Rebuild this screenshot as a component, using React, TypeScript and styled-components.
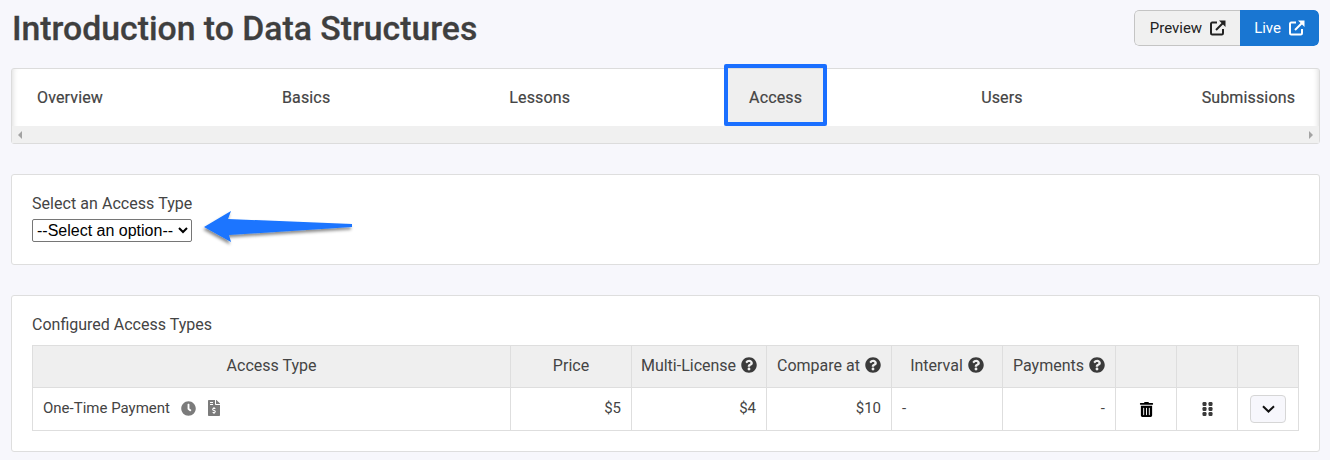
import React from "react";
import styled, { createGlobalStyle } from "styled-components";
import { FaClock, FaFileInvoiceDollar, FaQuestionCircle, FaTrashAlt } from "react-icons/fa";

const Global = createGlobalStyle`
  html, body { margin: 0; padding: 0; background: #f7f7fc; }
  body { font-family: Roboto, "Liberation Sans", sans-serif; color: #444; overflow: hidden; }
  * { box-sizing: border-box; }
`;

const Page = styled.div`
  width: 1330px;
  height: 460px;
  padding: 0 10px 0 11px;
  overflow: hidden;
`;

const Header = styled.header`
  display: flex;
  justify-content: space-between;
  align-items: center;
  height: 68px;
  padding: 0 1px 12px 1px;
`;

const Title = styled.h1`
  margin: 2px 0 0;
  font-size: 33.75px;
  line-height: 44px;
  font-weight: 500;
  color: #3f3f3f;
  -webkit-text-stroke: 0.3px #3f3f3f;
`;

const ButtonGroup = styled.div`
  display: flex;
  height: 36px;
  border-radius: 5px;
  overflow: hidden;
`;

const ViewButton = styled.button<{ $live?: boolean }>`
  display: flex;
  align-items: center;
  gap: 8px;
  height: 100%;
  padding: ${(p) => (p.$live ? "0 14px" : "0 14px 0 15px")};
  font: 400 15px Roboto, sans-serif;
  color: ${(p) => (p.$live ? "#fff" : "#222")};
  background: ${(p) => (p.$live ? "#1976d2" : "#f0f0f0")};
  border: ${(p) => (p.$live ? "none" : "1px solid #c4c4c4")};
  border-right: none;
  border-radius: ${(p) => (p.$live ? "0 5px 5px 0" : "5px 0 0 5px")};
`;

const NavCard = styled.nav`
  height: 76px;
  background: #fff;
  border: 1px solid #dcdcdc;
  border-radius: 3px;
  display: flex;
  flex-direction: column;
  box-shadow: inset 6px 0 6px -6px rgba(0,0,0,0.18), inset -6px 0 6px -6px rgba(0,0,0,0.18);
`;

const TabRow = styled.div`
  display: flex;
  height: 57px;
  flex: none;
  gap: 129px;
`;

const Tab = styled.a<{ $active?: boolean }>`
  display: flex;
  align-items: center;
  justify-content: center;
  padding: 0 25px;
  font-size: 16px;
  font-weight: 400;
  letter-spacing: 0.14px;
  color: #444;
  -webkit-text-stroke: 0.2px #444;
  ${(p) =>
    p.$active &&
    `
    position: relative;
    background: #efefef;
    &::after {
      content: "";
      position: absolute;
      inset: -5px 0 0 0;
      border: 4px solid #1a6fff;
      border-radius: 2px;
    }
  `}
`;

const Scrollbar = styled.div`
  flex: 1;
  background: #f0f0f0;
  display: flex;
  align-items: center;
  justify-content: space-between;
  padding: 0 6px;
`;

const ScrollArrow = styled.span<{ $right?: boolean }>`
  width: 0;
  height: 0;
  border-top: 4px solid transparent;
  border-bottom: 4px solid transparent;
  ${(p) => (p.$right ? "border-left: 4px solid #a3a3a3;" : "border-right: 4px solid #a3a3a3;")}
`;

const SelectCard = styled.section`
  position: relative;
  margin-top: 30px;
  height: 91px;
  background: #fff;
  border: 1px solid #dedede;
  border-radius: 3px;
  padding: 19px 20px;
`;

const FieldLabel = styled.label`
  display: block;
  font-size: 16px;
  line-height: 19px;
  letter-spacing: 0.05px;
  color: #444;
  margin-bottom: 6px;
`;

const AccessSelect = styled.select`
  display: block;
  width: 160px;
  height: 23px;
  font: 16px "Liberation Sans", Arial, sans-serif;
  color: #000;
  background: #fff;
  border: 1px solid #767676;
  border-radius: 2px;
  padding: 0;
`;

const Arrow = styled.svg`
  position: absolute;
  left: 186px;
  top: 26px;
  overflow: visible;
`;

const TableCard = styled.section`
  margin-top: 30px;
  height: 157px;
  background: #fff;
  border: 1px solid #dedede;
  border-radius: 3px;
  padding: 19px 20px;
`;

const SectionTitle = styled.div`
  font-size: 16px;
  line-height: 19px;
  color: #444;
  margin-bottom: 11px;
`;

const Table = styled.table`
  border-collapse: collapse;
  table-layout: fixed;
  width: 1267px;
`;

const Th = styled.th`
  height: 42px;
  padding: 0 0 2px;
  background: #efefef;
  border: 1px solid #dedede;
  font-size: 16px;
  font-weight: 400;
  color: #444;
  text-align: center;
  white-space: nowrap;
`;

const Td = styled.td<{ $align?: string }>`
  height: 43px;
  padding: 0 10px 2px;
  border: 1px solid #dedede;
  font-size: 15px;
  color: #444;
  text-align: ${(p) => p.$align || "left"};
  white-space: nowrap;
`;

const ActionCell = styled.td`
  height: 43px;
  padding: 0;
  border: 1px solid #dedede;
  text-align: center;
  vertical-align: middle;
`;

const ActionCenter = styled.div`
  display: flex;
  align-items: center;
  justify-content: center;
`;

const TypeName = styled.span`
  font-size: 15px;
  display: inline-flex;
  align-items: center;
  color: #444;
`;

const TypeIcons = styled.span`
  display: inline-flex;
  gap: 10px;
  margin-left: 11px;
  align-items: center;
  color: #7b7b7b;
`;

const HelpIcon = styled(FaQuestionCircle)`
  width: 16px;
  height: 16px;
  color: #3a3a3a;
  margin-left: 5px;
  vertical-align: -2px;
`;

const ChevronButton = styled.button`
  width: 36px;
  height: 28px;
  display: inline-flex;
  align-items: center;
  justify-content: center;
  padding: 0;
  background: #f7f7fc;
  border: 1px solid #d6d6d6;
  border-radius: 4px;
  color: #111;
`;

const ExternalLink = () => (
  <svg width="16" height="16" viewBox="0 0 16 16" fill="none" stroke="currentColor" strokeWidth="2">
    <path d="M7 2.5H2.2A1.2 1.2 0 0 0 1 3.7v9.6a1.2 1.2 0 0 0 1.2 1.2h9.6a1.2 1.2 0 0 0 1.2-1.2V9" />
    <path d="M6 10 13 3" />
    <path d="M9 0.5H15.5V7z" fill="currentColor" stroke="none" />
  </svg>
);

const Grip = () => (
  <svg width="11" height="14" viewBox="0 0 11 14" fill="#3a3a3a">
    {[0, 5, 10].map((y) => (
      <React.Fragment key={y}>
        <rect x="0.5" y={y} width="4" height="4" rx="1.2" />
        <rect x="6.5" y={y} width="4" height="4" rx="1.2" />
      </React.Fragment>
    ))}
  </svg>
);

const Chevron = () => (
  <svg width="13" height="8" viewBox="0 0 13 8" fill="none" stroke="currentColor" strokeWidth="2">
    <path d="M1 1.2 6.5 6.5 12 1.2" />
  </svg>
);

const columns = [478, 121, 135, 125, 111, 113, 61, 61, 61];

export default function App() {
  return (
    <Page>
      <Global />
      <Header>
        <Title>Introduction to Data Structures</Title>
        <ButtonGroup>
          <ViewButton>Preview <ExternalLink /></ViewButton>
          <ViewButton $live>Live <ExternalLink /></ViewButton>
        </ButtonGroup>
      </Header>

      <NavCard>
        <TabRow>
          <Tab>Overview</Tab>
          <Tab>Basics</Tab>
          <Tab>Lessons</Tab>
          <Tab $active>Access</Tab>
          <Tab>Users</Tab>
          <Tab>Submissions</Tab>
        </TabRow>
        <Scrollbar>
          <ScrollArrow />
          <ScrollArrow $right />
        </Scrollbar>
      </NavCard>

      <SelectCard>
        <FieldLabel htmlFor="access">Select an Access Type</FieldLabel>
        <AccessSelect id="access" defaultValue="">
          <option value="">--Select an option--</option>
        </AccessSelect>
        <Arrow width="160" height="50" viewBox="0 0 160 50">
          <defs>
            <filter id="arrowShadow" x="-20%" y="-50%" width="140%" height="220%">
              <feDropShadow dx="-1" dy="2.5" stdDeviation="1.5" floodColor="#000" floodOpacity="0.45" />
            </filter>
          </defs>
          <path d="M6 26 L33 10 L30 18 L154 23 L154 26 L31 34 L33 41 Z" fill="#1a75ff" filter="url(#arrowShadow)" />
        </Arrow>
      </SelectCard>

      <TableCard>
        <SectionTitle>Configured Access Types</SectionTitle>
        <Table>
          <colgroup>
            {columns.map((w, i) => (
              <col key={i} style={{ width: w }} />
            ))}
          </colgroup>
          <thead>
            <tr>
              <Th>Access Type</Th>
              <Th>Price</Th>
              <Th>Multi-License<HelpIcon /></Th>
              <Th>Compare at<HelpIcon /></Th>
              <Th>Interval<HelpIcon /></Th>
              <Th>Payments<HelpIcon /></Th>
              <Th />
              <Th />
              <Th />
            </tr>
          </thead>
          <tbody>
            <tr>
              <Td>
                <TypeName>
                  One-Time Payment
                  <TypeIcons>
                    <FaClock size={15} />
                    <FaFileInvoiceDollar size={16} />
                  </TypeIcons>
                </TypeName>
              </Td>
              <Td $align="right">$5</Td>
              <Td $align="right">$4</Td>
              <Td $align="right">$10</Td>
              <Td>-</Td>
              <Td $align="right">-</Td>
              <ActionCell><ActionCenter><FaTrashAlt size={15} color="#000" /></ActionCenter></ActionCell>
              <ActionCell><ActionCenter><Grip /></ActionCenter></ActionCell>
              <ActionCell>
                <ActionCenter>
                  <ChevronButton aria-label="Expand"><Chevron /></ChevronButton>
                </ActionCenter>
              </ActionCell>
            </tr>
          </tbody>
        </Table>
      </TableCard>
    </Page>
  );
}
